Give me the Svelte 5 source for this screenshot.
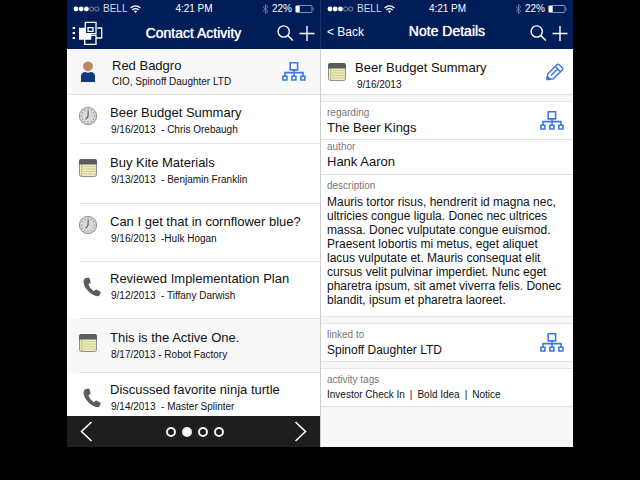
<script>
  const activities = [
    { icon: 'clock', title: 'Beer Budget Summary', meta: '9/16/2013  - Chris Orebaugh' },
    { icon: 'note', title: 'Buy Kite Materials', meta: '9/13/2013  - Benjamin Franklin' },
    { icon: 'clock', title: 'Can I get that in cornflower blue?', meta: '9/16/2013  -Hulk Hogan' },
    { icon: 'phone', title: 'Reviewed Implementation Plan', meta: '9/12/2013  - Tiffany Darwish' },
    { icon: 'note', title: 'This is the Active One.', meta: '8/17/2013 - Robot Factory', active: true },
    { icon: 'phone', title: 'Discussed favorite ninja turtle', meta: '9/14/2013  - Master Splinter' }
  ];
  const description = [
    'Mauris tortor risus, hendrerit id magna nec,',
    'ultricies congue ligula. Donec nec ultrices',
    'massa. Donec vulputate congue euismod.',
    'Praesent lobortis mi metus, eget aliquet',
    'lacus vulputate et. Mauris consequat elit',
    'cursus velit pulvinar imperdiet. Nunc eget',
    'pharetra ipsum, sit amet viverra felis. Donec',
    'blandit, ipsum et pharetra laoreet.'
  ].join('\n');
  const tags = ['Investor Check In', 'Bold Idea', 'Notice'];
  const ticks = [0, 30, 60, 90, 120, 150, 180, 210, 240, 270, 300, 330];
  let page = $state(1);
</script>

{#snippet statusBar()}
  <div class="status">
    <div class="carrier">
      <svg width="27" height="6" viewBox="0 0 27 6" aria-hidden="true">
        <g fill="#fff"><circle cx="3" cy="3" r="2.4" /><circle cx="8.2" cy="3" r="2.4" /><circle cx="13.4" cy="3" r="2.4" /></g>
        <g fill="none" stroke="#a9b2cb" stroke-width=".7"><circle cx="18.6" cy="3" r="2.1" /><circle cx="23.8" cy="3" r="2.1" /></g>
      </svg>
      <span>BELL</span>
      <svg width="11" height="8" viewBox="0 0 11 8" aria-hidden="true">
        <g fill="none" stroke="#fff" stroke-width="1.3"><path d="M.6 2.9Q5.5-1.3 10.4 2.9" /><path d="M2.4 4.9Q5.5 2.3 8.6 4.9" /></g>
        <path d="M3.9 6.1Q5.5 4.9 7.1 6.1L5.5 7.9Z" fill="#fff" />
      </svg>
    </div>
    <time>4:21 PM</time>
    <div class="power">
      <svg width="7" height="10" viewBox="0 0 7 10" aria-hidden="true"><path d="M1 2.7 5.8 7.2 3.4 9.4V.6L5.8 2.8 1 7.3" fill="none" stroke="#7482a8" stroke-width=".9" /></svg>
      <span>22%</span>
      <svg width="20" height="8" viewBox="0 0 20 8" aria-hidden="true"><rect x=".5" y=".5" width="16.5" height="7" rx="1" fill="none" stroke="#a9b2cb" stroke-width=".8" /><path d="M1 1h3.7v6H1z" fill="#fff" /><path d="M18 2.5q1.5 1.5 0 3z" fill="#a9b2cb" /></svg>
    </div>
  </div>
{/snippet}

{#snippet tools()}
  <div class="tools">
    <button aria-label="Search"><svg width="17" height="17" viewBox="0 0 17 17"><circle cx="6.7" cy="6.5" r="5.6" /><path d="m10.8 10.6 5 5" /></svg></button>
    <button aria-label="Add"><svg width="16" height="17" viewBox="0 0 16 17"><path d="M8 1v15M.5 8.5h15" /></svg></button>
  </div>
{/snippet}

{#snippet orgIcon()}
  <button class="org" aria-label="Show hierarchy">
    <svg width="24" height="21" viewBox="0 0 24 21" fill="none" stroke="#3f78de" stroke-width="1.6">
      <path d="M8.2 1.7h7.4v7.2H8.2zM12 9v5.8M3 14.8v-3.2h18v3.2M.9 15.2h4v3.8h-4zM9.9 15.2h4v3.8h-4zM18.9 15.2h4v3.8h-4z" />
    </svg>
  </button>
{/snippet}

{#snippet icon(kind)}
  <svg class="icon" width="26" height="20" viewBox="0 0 26 20" aria-hidden="true">
    {#if kind === 'clock'}
      <circle cx="10" cy="9" r="8.6" fill="#d9dadc" stroke="#8e8f92" stroke-width="1" />
      {#each ticks as a}
        <path d="M10 1.7v1.6" stroke="#77787b" stroke-width=".8" transform={`rotate(${a} 10 9)`} />
      {/each}
      <path d="M10.2 3.8 10 9.4 7.6 12.4" fill="none" stroke="#55565a" stroke-width="1.1" />
    {:else if kind === 'note'}
      <rect x="1.500" y="1.500" width="17" height="17" rx="2" fill="#efecb9" stroke="#85857c" stroke-width=".9" />
      <path d="M5 8.5h13M5 11h13M5 13.5h13M5 16h13" stroke="#c9c69a" stroke-width=".8" />
      <path d="M3.8 6v12" stroke="#a8a68c" stroke-width=".8" />
      <path d="M1 6.500V3.200Q1 1 3.200 1h13.600Q19 1 19 3.200v3.300z" fill="#5b5c60" />
    {:else}
      <path d="M7.900 1.100 10.600.500q.600 0 .800.500l1.200 4.300q0 .600-.500.900l-1.800 1q1.400 4.500 5.500 7l1.600-1.500q.500-.400 1-.100l4 2.200q.600.400.300 1l-1.200 2.400q-.500.900-1.800 1-5-.200-9.500-5.200Q6 9.600 5.500 5q0-3.300 2.400-3.900z" fill="#5b5c60" />
    {/if}
  </svg>
{/snippet}

<main>
  <section class="panel" aria-label="Contact Activity">
    <header>
      {@render statusBar()}
      <div class="bar">
        <button class="logo" aria-label="Menu">
          <svg width="31" height="25" viewBox="36 61 93 75">
            <path d="M38 79h7v6h-7zM38 94h7v6h-7zM38 109h7v6h-7zM57 81h37v36H57z" fill="#fff" />
            <path d="M77 64h32v35H77z" fill="#001d57" />
            <path d="M76 65h32v34H76zM84 81h15v11H84zM74 104v27h34v-27zM112 82h13v30h-15" fill="none" stroke="#fff" stroke-width="4" />
          </svg>
        </button>
        <h1>Contact Activity</h1>
        {@render tools()}
      </div>
    </header>
    <div class="contact">
      <svg width="16" height="22" viewBox="0 0 16 22" aria-hidden="true"><circle cx="8" cy="5.300" r="4.900" fill="#b98a5e" /><path d="M1 21v-5.500Q1 11 5.500 11q2.500 1.600 5 0Q15 11 15 15.500V21z" fill="#123a7c" /></svg>
      <div class="who"><h2>Red Badgro</h2><p class="sub">CIO, Spinoff Daughter LTD</p></div>
      {@render orgIcon()}
    </div>
    <ul>
      {#each activities as item}
        <li class={item.icon} class:active={item.active}>
          <a href="#note">
            {@render icon(item.icon)}
            <span class="text"><span class="title">{item.title}</span><span class="sub meta">{item.meta}</span></span>
          </a>
        </li>
      {/each}
    </ul>
    <footer>
      <button aria-label="Previous page" onclick={() => (page = Math.max(0, page - 1))}><svg width="13" height="21" viewBox="0 0 13 21"><path d="M11.500 1 1.500 10.500l10 9.500" /></svg></button>
      <div class="dots">
        {#each [0, 1, 2, 3] as i}
          <button class="dot" class:on={page === i} aria-label={`Page ${i + 1}`} onclick={() => (page = i)}></button>
        {/each}
      </div>
      <button aria-label="Next page" onclick={() => (page = Math.min(3, page + 1))}><svg width="13" height="21" viewBox="0 0 13 21"><path d="m1.500 1 10 9.500-10 9.500" /></svg></button>
    </footer>
  </section>

  <section class="panel details" id="note" aria-label="Note Details">
    <header>
      {@render statusBar()}
      <div class="bar">
        <a class="back" href="#activity">&lt; Back</a>
        <h1>Note Details</h1>
        {@render tools()}
      </div>
    </header>
    <div class="note-head">
      {@render icon('note')}
      <div class="who"><h2>Beer Budget Summary</h2><p class="sub">9/16/2013</p></div>
      <button aria-label="Edit note">
        <svg width="18" height="18" viewBox="0 0 18 18" fill="none" stroke="#3f78de" stroke-width="1.500" stroke-linejoin="round">
          <path d="M1.200 16.500 1.800 11 10.800 1.800q1.200-1 2.400 0l3 3q1 1.200 0 2.400L7 16zM9.300 3.500l5.200 5.200M5 12.500l6.500-6.500" />
          <path d="M1.200 16.500v-3l3 2.600z" fill="#3f78de" />
        </svg>
      </button>
    </div>
    <div class="band"></div>
    <div class="field wide">
      <div><h3>regarding</h3><p class="value">The Beer Kings</p></div>
      {@render orgIcon()}
    </div>
    <div class="field author">
      <div><h3>author</h3><p class="value">Hank Aaron</p></div>
    </div>
    <div class="field description">
      <div><h3>description</h3><p>{description}</p></div>
    </div>
    <div class="band"></div>
    <div class="field wide">
      <div><h3>linked to</h3><p class="company">Spinoff Daughter LTD</p></div>
      {@render orgIcon()}
    </div>
    <div class="band"></div>
    <div class="field wide">
      <div>
        <h3>activity tags</h3>
        <p class="tags">{#each tags as tag, i}{#if i}<span>|</span>{/if}<span>{tag}</span>{/each}</p>
      </div>
    </div>
  </section>
</main>

<style>
  :global(body) { background: #000; }
  main {
    display: grid;
    grid-template-columns: 1fr 1fr;
    padding: 0 67px 33px;
    font-family: "Liberation Sans", Arial, sans-serif;
    color: #111;
    background: #000;
  }
  h1, h2, h3, p, ul { margin: 0; padding: 0; font-weight: normal; }
  button { display: flex; padding: 0; border: 0; background: none; color: inherit; cursor: pointer; }
  a { color: inherit; text-decoration: none; }
  svg { display: block; flex: none; }
  .panel { display: flex; flex-direction: column; min-width: 0; background: #fff; }
  .details { background: #f7f7f7; }
  header { background: #001d57; color: #fff; }
  .status {
    display: grid;
    grid-template-columns: 1fr auto 1fr;
    align-items: center;
    height: 18px;
    padding: 0 5px 0 6px;
    font-size: 10px;
    line-height: 18px;
  }
  .carrier, .power { display: flex; align-items: center; gap: 3px; }
  .carrier { color: #d5daea; }
  .power { justify-content: flex-end; }
  .bar {
    display: grid;
    grid-template-columns: 1fr auto 1fr;
    align-items: center;
    height: 31px;
    padding: 0 5px;
  }
  h1 { font-size: 14px; line-height: 18px; padding-bottom: 2px; text-shadow: 0 0 1px #fff; }
  .details h1 { padding-bottom: 5px; }
  .tools { display: flex; align-items: center; justify-content: flex-end; gap: 5px; }
  .tools svg { fill: none; stroke: #fff; stroke-width: 1.4; }
  .back { padding: 0 0 3px 1px; font-size: 12px; }
  .contact, .note-head { display: flex; align-items: center; height: 45px; border-bottom: 1px solid #e2e2e2; }
  .contact { padding: 0 14px 0 13px; gap: 16px; background: #f8f8f8; }
  .note-head { padding: 0 9px 0 6px; gap: 2px; background: #fff; }
  .who { flex: 1; min-width: 0; }
  h2, .title { font-size: 13px; line-height: 18px; }
  .sub { font-size: 10px; line-height: 16px; }
  .contact .sub { line-height: 14px; }
  .contact .who { padding-top: 3px; }
  .note-head .who { padding-top: 8px; }
  .note-head .sub { padding-left: 2px; }
  ul { display: grid; grid-template-rows: 49px 60px 58px 57px 54px 43px; list-style: none; }
  li { background: linear-gradient(#e2e2e2, #e2e2e2) 13px 100% / 100% 1px no-repeat #fff; }
  li.active { background-color: #f8f8f8; }
  li:last-child { background: #fff; }
  li a { display: flex; gap: 6px; padding: 9px 0 0 11px; }
  li .icon { margin-top: 3px; }
  li.note a { padding-top: 10px; }
  li.note .icon { margin-top: 4px; }
  li.phone a { padding-top: 8px; }
  li.phone .icon { margin-top: 7px; }
  .text { display: flex; flex-direction: column; min-width: 0; white-space: pre; }
  .meta { padding-left: 1px; }
  footer { display: flex; align-items: center; justify-content: space-between; height: 31px; padding: 0 13px; background: #1e1e1e; }
  footer svg { fill: none; stroke: #fff; stroke-width: 1.6; }
  .dots { display: flex; gap: 6px; padding-left: 2px; }
  .dot { box-sizing: border-box; width: 10px; height: 10px; border: 2px solid #f2f2f2; border-radius: 50%; }
  .dot.on { background: #fff; }
  .details { border-left: 1px solid #cfcfcf; }
  .details header { margin-left: -1px; border-left: 1px solid #1b3569; }
  .band { height: 6px; border-bottom: 1px solid #e6e6e6; }
  .field { display: flex; align-items: center; justify-content: space-between; padding-left: 6px; background: #fff; }
  .wide { height: 37px; padding-right: 9px; border-bottom: 1px solid #e2e2e2; }
  .author { align-items: flex-start; height: 34px; border-bottom: 1px solid #e2e2e2; }
  h3 { color: #777; font-size: 10px; line-height: 14px; }
  .value { font-size: 13px; line-height: 16px; }
  .company { font-size: 12px; line-height: 16px; }
  .description { padding-top: 4px; padding-bottom: 9px; border-bottom: 1px solid #e6e6e6; }
  .description p { padding-top: 2px; font-size: 12px; line-height: 14px; white-space: pre-line; }
  .tags { display: flex; gap: 5px; font-size: 10px; line-height: 16px; }
</style>
